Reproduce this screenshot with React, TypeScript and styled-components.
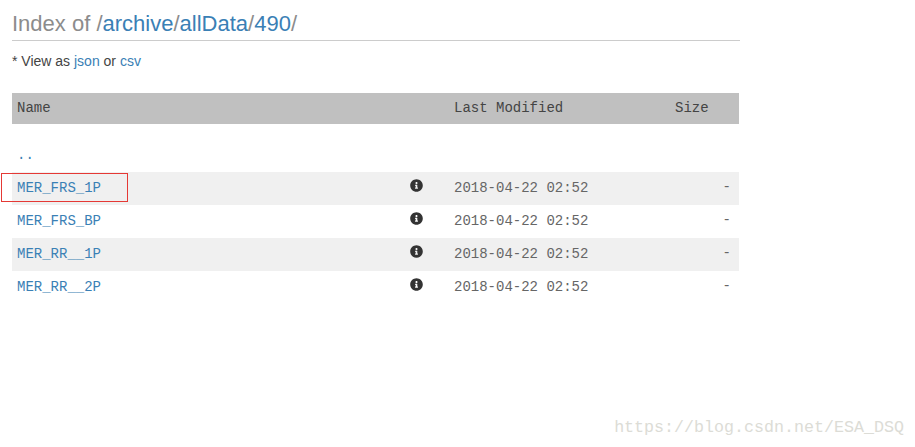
import styled, { createGlobalStyle } from "styled-components";
import { FaInfoCircle } from "react-icons/fa";

const GlobalStyle = createGlobalStyle`
  html, body {
    margin: 0;
    padding: 0;
    background: #fff;
  }
  body {
    font-family: "Liberation Sans", Arial, sans-serif;
    color: #444;
    height: 447px;
    overflow: hidden;
  }
`;

const Page = styled.div`
  position: relative;
  width: 915px;
  height: 447px;
  padding: 0 0 0 12px;
  box-sizing: border-box;
`;

const Content = styled.div`
  width: 728px;
`;

const Heading = styled.h1`
  margin: 0;
  padding: 11px 0 7px;
  height: 41px;
  box-sizing: border-box;
  border-bottom: 1px solid #ccc;
  font-size: 22px;
  line-height: 25px;
  font-weight: 400;
  color: #8c8c8c;
  white-space: nowrap;
`;

const Link = styled.a`
  color: #3a80b5;
  text-decoration: none;
`;

const ViewAs = styled.p`
  margin: 0;
  padding-top: 10px;
  height: 52px;
  box-sizing: border-box;
  font-size: 14px;
  line-height: 20px;
`;

const Table = styled.div`
  width: 727px;
  font-family: "Liberation Mono", "Courier New", monospace;
  font-size: 14px;
`;

const Row = styled.div<{ $striped?: boolean }>`
  display: grid;
  grid-template-columns: 397px 45px 1fr 60px;
  height: 33px;
  box-sizing: border-box;
  padding-bottom: 2px;
  align-items: center;
  background: ${(p) => (p.$striped ? "#f0f0f0" : "transparent")};
`;

const HeaderRow = styled(Row)`
  height: 31px;
  margin-bottom: 15px;
  background: #c0c0c0;
  color: #444;
`;

const NameCell = styled.div`
  position: relative;
  padding-left: 5px;
`;

const Highlight = styled.div`
  position: absolute;
  left: -11px;
  top: -7px;
  width: 125px;
  height: 27px;
  border: 1px solid #e53935;
`;

const InfoCell = styled.div`
  display: flex;
  justify-content: center;
  padding-right: 31px;
  color: #333;
  font-size: 13px;
  margin-top: -5px;
`;

const DateCell = styled.div`
  color: #666;
`;

const SizeCell = styled.div`
  text-align: right;
  padding-right: 8px;
  margin-top: -2px;
  color: #666;
`;

const HeaderSize = styled.div`
  margin-left: -4px;
`;

const Watermark = styled.div`
  position: absolute;
  right: 11px;
  top: 416px;
  font-family: "Liberation Mono", monospace;
  font-size: 16.67px;
  line-height: 24px;
  color: #dcdcd6;
`;

const rows = [
  { name: "MER_FRS_1P", striped: true, marked: true },
  { name: "MER_FRS_BP" },
  { name: "MER_RR__1P", striped: true },
  { name: "MER_RR__2P" },
];

export default function App() {
  return (
    <>
      <GlobalStyle />
      <Page>
        <Content>
          <Heading>
            Index of /<Link href="#">archive</Link>/<Link href="#">allData</Link>/<Link href="#">490</Link>/
          </Heading>
          <ViewAs>
            * View as <Link href="#">json</Link> or <Link href="#">csv</Link>
          </ViewAs>
          <Table>
            <HeaderRow>
              <NameCell>Name</NameCell>
              <div />
              <div>Last Modified</div>
              <HeaderSize>Size</HeaderSize>
            </HeaderRow>
            <Row>
              <NameCell>
                <Link href="#">..</Link>
              </NameCell>
            </Row>
            {rows.map((r) => (
              <Row key={r.name} $striped={r.striped}>
                <NameCell>
                  <Link href="#">{r.name}</Link>
                  {r.marked && <Highlight />}
                </NameCell>
                <InfoCell>
                  <FaInfoCircle />
                </InfoCell>
                <DateCell>2018-04-22 02:52</DateCell>
                <SizeCell>-</SizeCell>
              </Row>
            ))}
          </Table>
        </Content>
        <Watermark>https://blog.csdn.net/ESA_DSQ</Watermark>
      </Page>
    </>
  );
}
